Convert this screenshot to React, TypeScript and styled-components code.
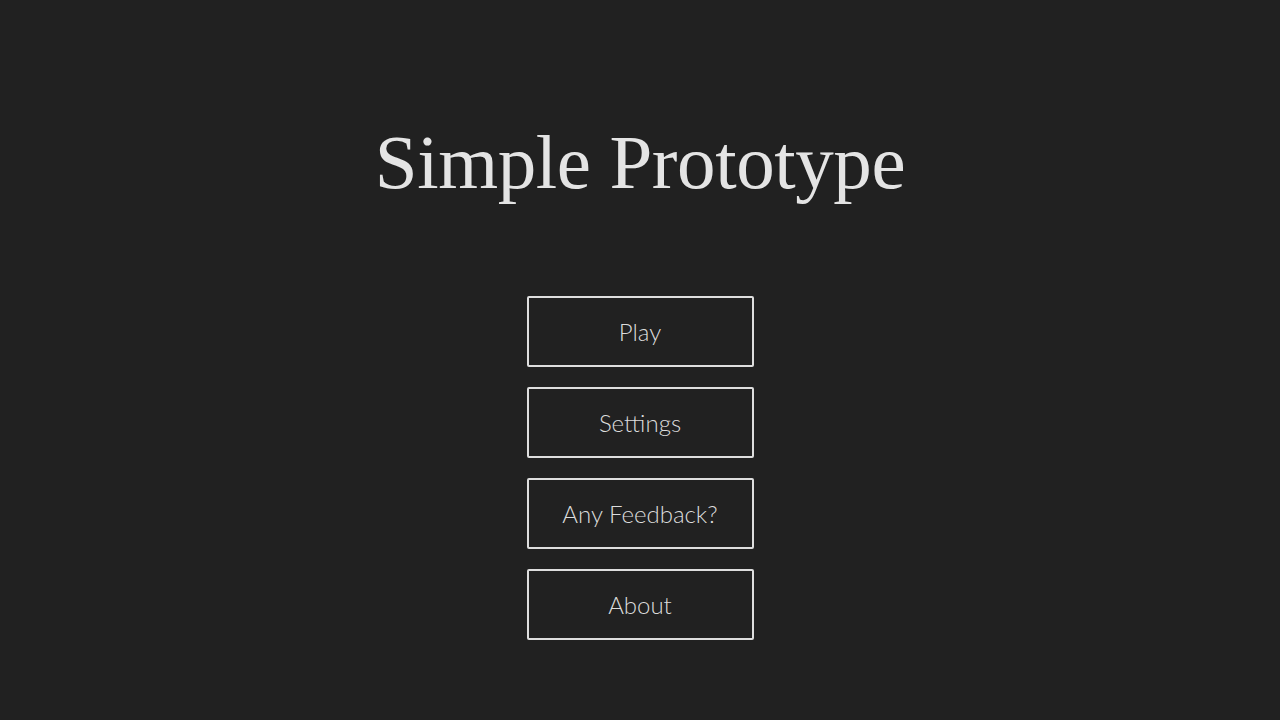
import React from "react";
import styled, { createGlobalStyle } from "styled-components";

const GlobalStyle = createGlobalStyle`
  html, body {
    margin: 0;
    padding: 0;
    background: #212121;
  }
  body {
    font-family: "Lato", "Noto Sans", sans-serif;
  }
`;

const Screen = styled.main`
  width: 100%;
  height: 720px;
  display: flex;
  flex-direction: column;
  align-items: center;
  box-sizing: border-box;
  padding-top: 117px;
`;

const Title = styled.h1`
  margin: 0;
  font-family: "Liberation Serif", "DejaVu Serif", serif;
  font-weight: 400;
  font-size: 77px;
  line-height: 90px;
  color: #e4e4e4;
  letter-spacing: -0.4px;
`;

const Menu = styled.nav`
  margin-top: 89px;
  display: flex;
  flex-direction: column;
  gap: 20px;
`;

const MenuButton = styled.button`
  width: 227px;
  height: 71px;
  box-sizing: border-box;
  background: transparent;
  border: 2px solid #dedede;
  border-radius: 2px;
  color: #dcdcdc;
  font-family: "Lato", "Noto Sans", sans-serif;
  font-weight: 300;
  font-size: 24px;
  cursor: pointer;
  padding: 0;
`;

const items = ["Play", "Settings", "Any Feedback?", "About"];

export default function App() {
  return (
    <>
      <GlobalStyle />
      <Screen>
        <Title>Simple Prototype</Title>
        <Menu>
          {items.map((label) => (
            <MenuButton key={label}>{label}</MenuButton>
          ))}
        </Menu>
      </Screen>
    </>
  );
}
